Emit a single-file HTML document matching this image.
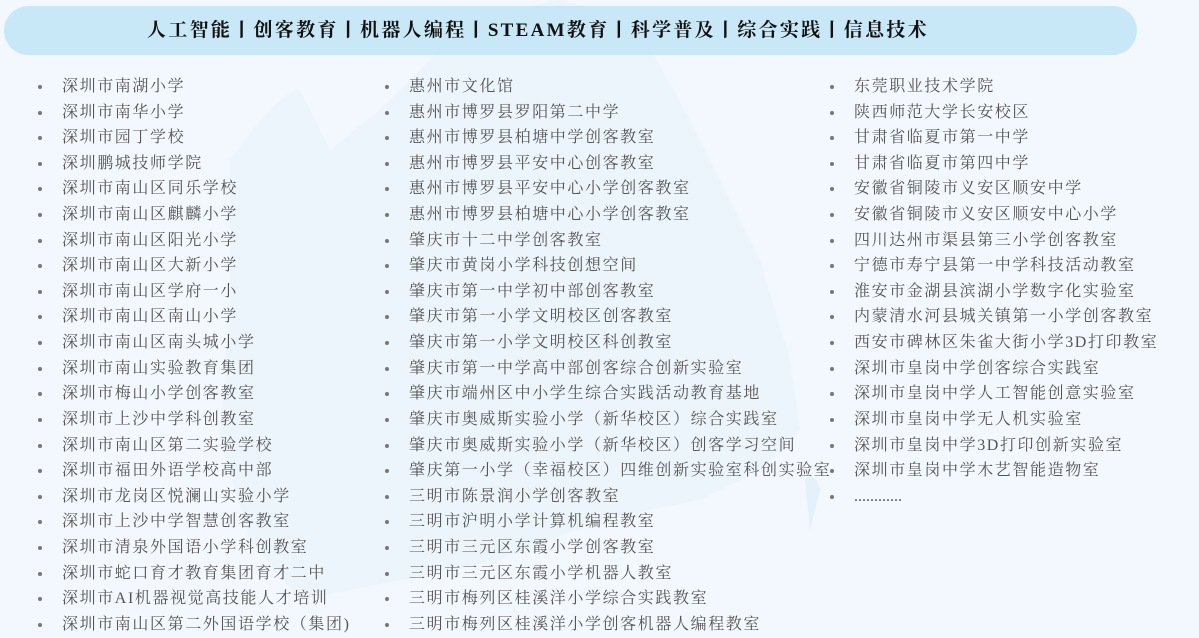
<!DOCTYPE html>
<html><head><meta charset="utf-8">
<style>
html,body{margin:0;padding:0}
body{width:1199px;height:638px;background:#f2f8fd;position:relative;overflow:hidden;font-family:"Liberation Serif","Noto Serif CJK SC",serif}
.banner{position:absolute;left:4px;top:6px;width:1133px;height:49px;background:#c8e7f7;border-radius:25px}
.title{position:absolute;left:0;top:6px;width:1076px;height:49px;line-height:49px;text-align:center;font-size:19px;font-weight:bold;color:#111;letter-spacing:2.3px;white-space:nowrap}
ul{position:absolute;top:74px;margin:0;padding:0;list-style:none}
li{height:25.62px;line-height:25.62px;font-size:16px;color:#555;letter-spacing:1.6px;white-space:nowrap;position:relative;padding-left:22px}
li:before{content:"";position:absolute;left:-2px;top:11px;width:4px;height:4px;border-radius:50%;background:#777}
.map{position:absolute;left:0;top:0}
</style></head><body>
<svg class="map" width="1199" height="638"><path d="M230 160 Q280 90 300 90 L330 150 380 110 430 60 460 20 560 0 600 10 640 30 690 120 760 260 790 360 800 430 760 470 700 500 600 520 500 560 400 580 300 600 250 540 220 440 230 300Z" fill="#edf5fc"/><path d="M805 480 Q815 470 820 490 L810 530 Z" fill="#e4f0fa"/></svg>
<div class="banner"></div>
<div class="title">人工智能丨创客教育丨机器人编程丨STEAM教育丨科学普及丨综合实践丨信息技术</div>
<ul style="left:40px">
<li>深圳市南湖小学</li><li>深圳市南华小学</li><li>深圳市园丁学校</li><li>深圳鹏城技师学院</li><li>深圳市南山区同乐学校</li><li>深圳市南山区麒麟小学</li><li>深圳市南山区阳光小学</li><li>深圳市南山区大新小学</li><li>深圳市南山区学府一小</li><li>深圳市南山区南山小学</li><li>深圳市南山区南头城小学</li><li>深圳市南山实验教育集团</li><li>深圳市梅山小学创客教室</li><li>深圳市上沙中学科创教室</li><li>深圳市南山区第二实验学校</li><li>深圳市福田外语学校高中部</li><li>深圳市龙岗区悦澜山实验小学</li><li>深圳市上沙中学智慧创客教室</li><li>深圳市清泉外国语小学科创教室</li><li>深圳市蛇口育才教育集团育才二中</li><li>深圳市AI机器视觉高技能人才培训</li><li>深圳市南山区第二外国语学校（集团)</li>
</ul>
<ul style="left:387px">
<li>惠州市文化馆</li><li>惠州市博罗县罗阳第二中学</li><li>惠州市博罗县柏塘中学创客教室</li><li>惠州市博罗县平安中心创客教室</li><li>惠州市博罗县平安中心小学创客教室</li><li>惠州市博罗县柏塘中心小学创客教室</li><li>肇庆市十二中学创客教室</li><li>肇庆市黄岗小学科技创想空间</li><li>肇庆市第一中学初中部创客教室</li><li>肇庆市第一小学文明校区创客教室</li><li>肇庆市第一小学文明校区科创教室</li><li>肇庆市第一中学高中部创客综合创新实验室</li><li>肇庆市端州区中小学生综合实践活动教育基地</li><li>肇庆市奥威斯实验小学（新华校区）综合实践室</li><li>肇庆市奥威斯实验小学（新华校区）创客学习空间</li><li>肇庆第一小学（幸福校区）四维创新实验室科创实验室</li><li>三明市陈景润小学创客教室</li><li>三明市沪明小学计算机编程教室</li><li>三明市三元区东霞小学创客教室</li><li>三明市三元区东霞小学机器人教室</li><li>三明市梅列区桂溪洋小学综合实践教室</li><li>三明市梅列区桂溪洋小学创客机器人编程教室</li>
</ul>
<ul style="left:832px">
<li>东莞职业技术学院</li><li>陕西师范大学长安校区</li><li>甘肃省临夏市第一中学</li><li>甘肃省临夏市第四中学</li><li>安徽省铜陵市义安区顺安中学</li><li>安徽省铜陵市义安区顺安中心小学</li><li>四川达州市渠县第三小学创客教室</li><li>宁德市寿宁县第一中学科技活动教室</li><li>淮安市金湖县滨湖小学数字化实验室</li><li>内蒙清水河县城关镇第一小学创客教室</li><li>西安市碑林区朱雀大街小学3D打印教室</li><li>深圳市皇岗中学创客综合实践室</li><li>深圳市皇岗中学人工智能创意实验室</li><li>深圳市皇岗中学无人机实验室</li><li>深圳市皇岗中学3D打印创新实验室</li><li>深圳市皇岗中学木艺智能造物室</li><li style="letter-spacing:0">............</li>
</ul>
</body></html>
